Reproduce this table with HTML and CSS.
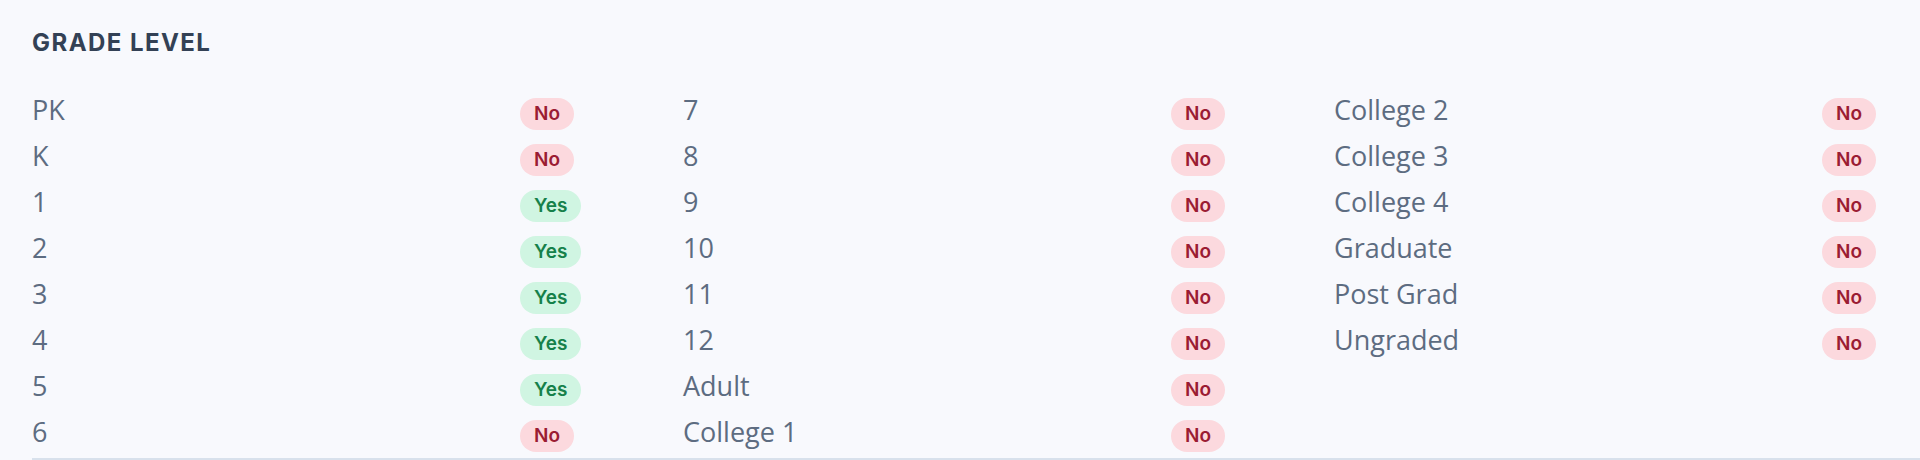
FILE: index.html
```html
<!DOCTYPE html>
<html lang="en">
<head>
<meta charset="utf-8">
<title>Grade Level</title>
<link rel="stylesheet" href="styles.css">
</head>
<body>
<main class="page">
  <section class="panel">
    <h2 class="panel-title">GRADE LEVEL</h2>
    <dl class="grade-grid">
      <div class="grade-row"><dt class="grade-label">PK</dt><dd class="grade-value"><span class="badge badge-no">No</span></dd></div>
      <div class="grade-row"><dt class="grade-label">K</dt><dd class="grade-value"><span class="badge badge-no">No</span></dd></div>
      <div class="grade-row"><dt class="grade-label">1</dt><dd class="grade-value"><span class="badge badge-yes">Yes</span></dd></div>
      <div class="grade-row"><dt class="grade-label">2</dt><dd class="grade-value"><span class="badge badge-yes">Yes</span></dd></div>
      <div class="grade-row"><dt class="grade-label">3</dt><dd class="grade-value"><span class="badge badge-yes">Yes</span></dd></div>
      <div class="grade-row"><dt class="grade-label">4</dt><dd class="grade-value"><span class="badge badge-yes">Yes</span></dd></div>
      <div class="grade-row"><dt class="grade-label">5</dt><dd class="grade-value"><span class="badge badge-yes">Yes</span></dd></div>
      <div class="grade-row"><dt class="grade-label">6</dt><dd class="grade-value"><span class="badge badge-no">No</span></dd></div>
      <div class="grade-row"><dt class="grade-label">7</dt><dd class="grade-value"><span class="badge badge-no">No</span></dd></div>
      <div class="grade-row"><dt class="grade-label">8</dt><dd class="grade-value"><span class="badge badge-no">No</span></dd></div>
      <div class="grade-row"><dt class="grade-label">9</dt><dd class="grade-value"><span class="badge badge-no">No</span></dd></div>
      <div class="grade-row"><dt class="grade-label">10</dt><dd class="grade-value"><span class="badge badge-no">No</span></dd></div>
      <div class="grade-row"><dt class="grade-label">11</dt><dd class="grade-value"><span class="badge badge-no">No</span></dd></div>
      <div class="grade-row"><dt class="grade-label">12</dt><dd class="grade-value"><span class="badge badge-no">No</span></dd></div>
      <div class="grade-row"><dt class="grade-label">Adult</dt><dd class="grade-value"><span class="badge badge-no">No</span></dd></div>
      <div class="grade-row"><dt class="grade-label">College 1</dt><dd class="grade-value"><span class="badge badge-no">No</span></dd></div>
      <div class="grade-row"><dt class="grade-label">College 2</dt><dd class="grade-value"><span class="badge badge-no">No</span></dd></div>
      <div class="grade-row"><dt class="grade-label">College 3</dt><dd class="grade-value"><span class="badge badge-no">No</span></dd></div>
      <div class="grade-row"><dt class="grade-label">College 4</dt><dd class="grade-value"><span class="badge badge-no">No</span></dd></div>
      <div class="grade-row"><dt class="grade-label">Graduate</dt><dd class="grade-value"><span class="badge badge-no">No</span></dd></div>
      <div class="grade-row"><dt class="grade-label">Post Grad</dt><dd class="grade-value"><span class="badge badge-no">No</span></dd></div>
      <div class="grade-row"><dt class="grade-label">Ungraded</dt><dd class="grade-value"><span class="badge badge-no">No</span></dd></div>
    </dl>
  </section>
</main>
</body>
</html>
```

FILE: styles.css
```css
html, body {
  margin: 0;
  padding: 0;
  background: #f8f9fd;
  overflow: hidden;
}

.page {
  padding-left: 32px;
  height: 460px;
}

.panel {
  width: 1953px;
  padding-top: 27px;
  padding-bottom: 6px;
  border-bottom: 2px solid #d8e1ec;
}

.panel-title {
  margin: 0;
  font-family: "Inter", "Liberation Sans", sans-serif;
  font-weight: 700;
  font-size: 24px;
  line-height: 32px;
  letter-spacing: 0.06em;
  color: #334155;
}

.grade-grid {
  margin: 36px 0 0 0;
  display: grid;
  grid-auto-flow: column;
  grid-template-columns: repeat(3, 651px);
  grid-template-rows: repeat(8, 35px);
  row-gap: 11px;
}

.grade-row {
  display: grid;
  grid-template-columns: 488px auto;
  align-items: start;
}

.grade-label {
  margin: 0;
  font-family: "Open Sans", "Liberation Sans", sans-serif;
  font-weight: 500;
  font-size: 27px;
  line-height: 30px;
  color: #5d6c81;
}

.grade-value {
  margin: 3px 0 0 0;
}

.badge {
  display: inline-block;
  height: 32px;
  line-height: 32px;
  padding: 0 14px;
  border-radius: 16px;
  font-family: "Inter", "Liberation Sans", sans-serif;
  font-weight: 600;
  font-size: 19px;
}

.badge-no {
  background: #fcd9de;
  color: #9b1c33;
}

.badge-yes {
  background: #d0f5e2;
  color: #16814a;
}
```
